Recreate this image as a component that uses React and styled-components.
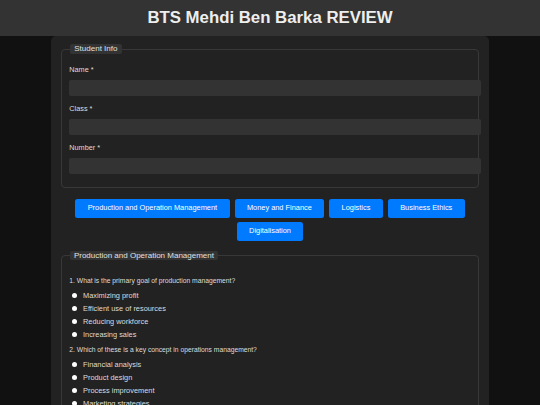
import React from 'react';
import styled, { createGlobalStyle } from 'styled-components';

const subjects = [
  'Production and Operation Management',
  'Money and Finance',
  'Logistics',
  'Business Ethics',
  'Digitalisation',
];

const questions = [
  {
    text: '1. What is the primary goal of production management?',
    options: ['Maximizing profit', 'Efficient use of resources', 'Reducing workforce', 'Increasing sales'],
  },
  {
    text: '2. Which of these is a key concept in operations management?',
    options: ['Financial analysis', 'Product design', 'Process improvement', 'Marketing strategies'],
  },
];

const fields = ['Name *', 'Class *', 'Number *'];

export default function App() {
  return (
    <>
      <GlobalStyle />
      <Header>
        <h1>BTS Mehdi Ben Barka REVIEW</h1>
      </Header>
      <Container>
        <Fieldset>
          <Legend>Student Info</Legend>
          {fields.map((field) => (
            <Field key={field}>
              <label>{field}</label>
              <Input type="text" />
            </Field>
          ))}
        </Fieldset>

        <Subjects>
          {subjects.map((subject) => (
            <SubjectButton key={subject}>{subject}</SubjectButton>
          ))}
        </Subjects>

        <Fieldset $quiz>
          <Legend $big>Production and Operation Management</Legend>
          {questions.map((q, qi) => (
            <Question key={qi}>
              <p>{q.text}</p>
              {q.options.map((opt) => (
                <Option key={opt}>
                  <Radio type="radio" name={`q${qi}`} />
                  <span>{opt}</span>
                </Option>
              ))}
            </Question>
          ))}
        </Fieldset>
      </Container>
    </>
  );
}

const GlobalStyle = createGlobalStyle`
  html, body {
    margin: 0;
    padding: 0;
    background-color: #111;
    font-family: "Liberation Sans", Arial, sans-serif;
    color: #ddd;
  }
  * {
    font-family: "Liberation Sans", Arial, sans-serif;
  }
`;

const Header = styled.header`
  height: 36px;
  background-color: #333;
  display: flex;
  align-items: center;
  justify-content: center;

  h1 {
    margin: 0;
    font-size: 16.8px;
    font-weight: bold;
    color: #eee;
  }
`;

const Container = styled.main`
  width: 418px;
  margin: 0 auto;
  padding: 8px 10px 0;
  background-color: #222;
  border-radius: 5px 5px 0 0;
  min-height: 361px;
`;

const Fieldset = styled.fieldset`
  margin: 0;
  border: 1px solid #383838;
  border-radius: 4px;
  padding: ${(p) => (p.$quiz ? '17px 7.3px 0' : '11.8px 7.3px 13px')};
  min-width: 0;
`;

const Legend = styled.legend`
  background-color: #333;
  color: #e0e0e0;
  font-size: 8px;
  line-height: ${(p) => (p.$big ? '9px' : '10px')};
  padding: 0 4.3px;
  border-radius: 2px;
  margin-left: ${(p) => (p.$big ? '0.3px' : '0.7px')};
`;

const Field = styled.div`
  display: flex;
  flex-direction: column;
  margin-bottom: 8.6px;

  &:last-of-type {
    margin-bottom: 0;
  }

  label {
    font-size: 7.3px;
    line-height: 8.4px;
    color: #ddd;
    margin-bottom: 6px;
  }
`;

const Input = styled.input`
  width: 100%;
  height: 8px;
  padding: 4px 5px;
  border: none;
  border-radius: 2px;
  background-color: #333;
  color: #eee;
  font-size: 7.3px;
  outline: none;
`;

const Subjects = styled.div`
  display: flex;
  flex-wrap: wrap;
  justify-content: center;
  gap: 4.6px 5px;
  margin: 11px 0 10.4px;
`;

const SubjectButton = styled.button`
  background-color: #007bff;
  color: #fff;
  border: none;
  border-radius: 2.5px;
  font-size: 7.4px;
  line-height: 8.4px;
  padding: 5px 12.4px;
  cursor: pointer;
`;

const Question = styled.div`
  margin-bottom: 4.8px;

  p {
    margin: 0 0 3.8px;
    font-size: 6.74px;
    line-height: 7.8px;
    color: #ddd;
  }
`;

const Option = styled.label`
  display: flex;
  align-items: center;
  height: 13.2px;
  font-size: 7.4px;
  color: #ddd;
`;

const Radio = styled.input`
  appearance: none;
  width: 5px;
  height: 5px;
  margin: 0 6.2px 0 2.5px;
  border-radius: 50%;
  background-color: #fff;
`;
